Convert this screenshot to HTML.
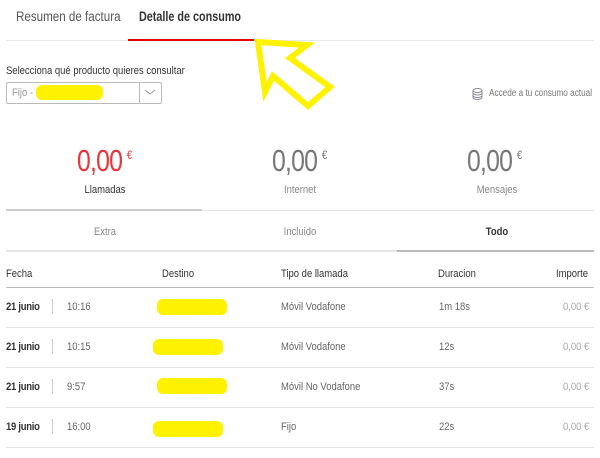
<!DOCTYPE html>
<html><head><meta charset="utf-8"><style>
*{margin:0;padding:0;box-sizing:border-box}
body{width:600px;height:458px;background:#fff;font-family:"Liberation Sans",sans-serif;position:relative;overflow:hidden;color:#333}
.a{position:absolute;white-space:nowrap;transform:scaleX(.86);transform-origin:left top}
.box{position:absolute}
.line{position:absolute;height:1px;background:#e6e6e6}
.num{position:absolute;font-size:31px;letter-spacing:-1px;top:143px;color:#777;transform:scaleX(.8);transform-origin:left top;white-space:nowrap}
.num span{font-size:12px;letter-spacing:0;vertical-align:top;position:relative;top:5px;margin-left:6px}
.lab{position:absolute;font-size:11px;top:184px;width:120px;text-align:center;color:#888;transform:scaleX(.86)}
.y{position:absolute;background:#fff200;border-radius:6px;height:16px;width:70px}
.r{font-size:11px;color:#666}
.b{font-size:11px;color:#333;font-weight:bold;letter-spacing:-0.3px}
</style></head><body>
<div class="a" style="left:16px;top:9px;font-size:13.5px;color:#555">Resumen de factura</div>
<div class="a" style="left:139px;top:9px;font-size:13.5px;color:#333;font-weight:bold;transform:scaleX(.8)">Detalle de consumo</div>
<div class="line" style="left:6px;top:40px;width:588px;background:#e8e8e8"></div>
<div class="box" style="left:128px;top:39px;width:126px;height:2px;background:#e60000"></div>
<svg class="box" style="left:0;top:0" width="600" height="458"><polygon points="258,42 307,45 290,58 330,87 308,106 273,76 265,92" fill="none" stroke="#fff200" stroke-width="6" stroke-linejoin="miter"/></svg>
<div class="a" style="left:6px;top:65px;font-size:11px;color:#333">Selecciona qué producto quieres consultar</div>
<div class="box" style="left:6px;top:82px;width:156px;height:22px;border:1px solid #bbb;border-radius:2px"></div>
<div class="box" style="left:139px;top:82px;width:1px;height:22px;background:#bbb"></div>
<svg class="box" style="left:144px;top:88px" width="12" height="8"><polyline points="1,2 6,6 11,2" fill="none" stroke="#999" stroke-width="1"/></svg>
<div class="a" style="left:12px;top:87px;font-size:11px;color:#999">Fijo -</div>
<div class="y" style="left:36px;top:85px;width:67px;height:15px"></div>
<svg class="box" style="left:472px;top:88px" width="11" height="12"><g fill="none" stroke="#889" stroke-width="1"><ellipse cx="5.5" cy="2.5" rx="4.5" ry="2"/><path d="M1 2.5v7c0 1.2 2 2 4.5 2s4.5-.8 4.5-2v-7M1 5c0 1.2 2 2 4.5 2S10 6.2 10 5M1 7.5c0 1.2 2 2 4.5 2s4.5-.8 4.5-2"/></g></svg>
<div class="a" style="left:489px;top:88px;font-size:10px;color:#777;transform:scaleX(.82)">Accede a tu consumo actual</div>
<div class="num" style="left:77px;color:#e8343a">0,00<span>€</span></div>
<div class="num" style="left:272px">0,00<span>€</span></div>
<div class="num" style="left:467px">0,00<span>€</span></div>
<div class="lab" style="left:45px;color:#333">Llamadas</div>
<div class="lab" style="left:240px">Internet</div>
<div class="lab" style="left:437px">Mensajes</div>
<div class="line" style="left:6px;top:210px;width:588px;height:1px;background:#e6e6e6"></div>
<div class="box" style="left:6px;top:209px;width:196px;height:2px;background:#ccc"></div>
<div class="lab" style="left:45px;top:226px;font-size:11px">Extra</div>
<div class="lab" style="left:240px;top:226px;font-size:11px">Incluido</div>
<div class="lab" style="left:437px;top:226px;font-size:11px;color:#333;font-weight:bold">Todo</div>
<div class="line" style="left:6px;top:250px;width:588px;height:2px;background:#e6e6e6"></div>
<div class="box" style="left:397px;top:250px;width:197px;height:2px;background:#bbb"></div>
<div class="a" style="left:6px;top:268px;font-size:11px;color:#333">Fecha</div>
<div class="a" style="left:162px;top:268px;font-size:11px;color:#333">Destino</div>
<div class="a" style="left:281px;top:268px;font-size:11px;color:#333">Tipo de llamada</div>
<div class="a" style="left:438px;top:268px;font-size:11px;color:#333">Duracion</div>
<div class="a" style="left:556px;top:268px;font-size:11px;color:#333">Importe</div>
<div class="line" style="left:6px;top:287px;width:588px;background:#bbb"></div>

<div class="a b" style="left:6px;top:301px">21 junio</div>
<div class="box" style="left:52px;top:299px;width:1px;height:15px;background:#ccc"></div>
<div class="a r" style="left:67px;top:301px">10:16</div>
<div class="y" style="left:157px;top:299px"></div>
<div class="a r" style="left:281px;top:301px">Móvil Vodafone</div>
<div class="a r" style="left:439px;top:301px">1m 18s</div>
<div class="a r" style="left:563px;top:301px;color:#aaa">0,00 €</div>
<div class="line" style="left:6px;top:327px;width:588px"></div>

<div class="a b" style="left:6px;top:341px">21 junio</div>
<div class="box" style="left:52px;top:339px;width:1px;height:15px;background:#ccc"></div>
<div class="a r" style="left:67px;top:341px">10:15</div>
<div class="y" style="left:153px;top:339px"></div>
<div class="a r" style="left:281px;top:341px">Móvil Vodafone</div>
<div class="a r" style="left:439px;top:341px">12s</div>
<div class="a r" style="left:563px;top:341px;color:#aaa">0,00 €</div>
<div class="line" style="left:6px;top:367px;width:588px"></div>

<div class="a b" style="left:6px;top:381px">21 junio</div>
<div class="box" style="left:52px;top:379px;width:1px;height:15px;background:#ccc"></div>
<div class="a r" style="left:67px;top:381px">9:57</div>
<div class="y" style="left:157px;top:378px"></div>
<div class="a r" style="left:281px;top:381px">Móvil No Vodafone</div>
<div class="a r" style="left:439px;top:381px">37s</div>
<div class="a r" style="left:563px;top:381px;color:#aaa">0,00 €</div>
<div class="line" style="left:6px;top:407px;width:588px"></div>

<div class="a b" style="left:6px;top:421px">19 junio</div>
<div class="box" style="left:52px;top:419px;width:1px;height:15px;background:#ccc"></div>
<div class="a r" style="left:67px;top:421px">16:00</div>
<div class="y" style="left:153px;top:421px"></div>
<div class="a r" style="left:281px;top:421px">Fijo</div>
<div class="a r" style="left:439px;top:421px">22s</div>
<div class="a r" style="left:563px;top:421px;color:#aaa">0,00 €</div>
<div class="line" style="left:6px;top:447px;width:588px"></div>
</body></html>
